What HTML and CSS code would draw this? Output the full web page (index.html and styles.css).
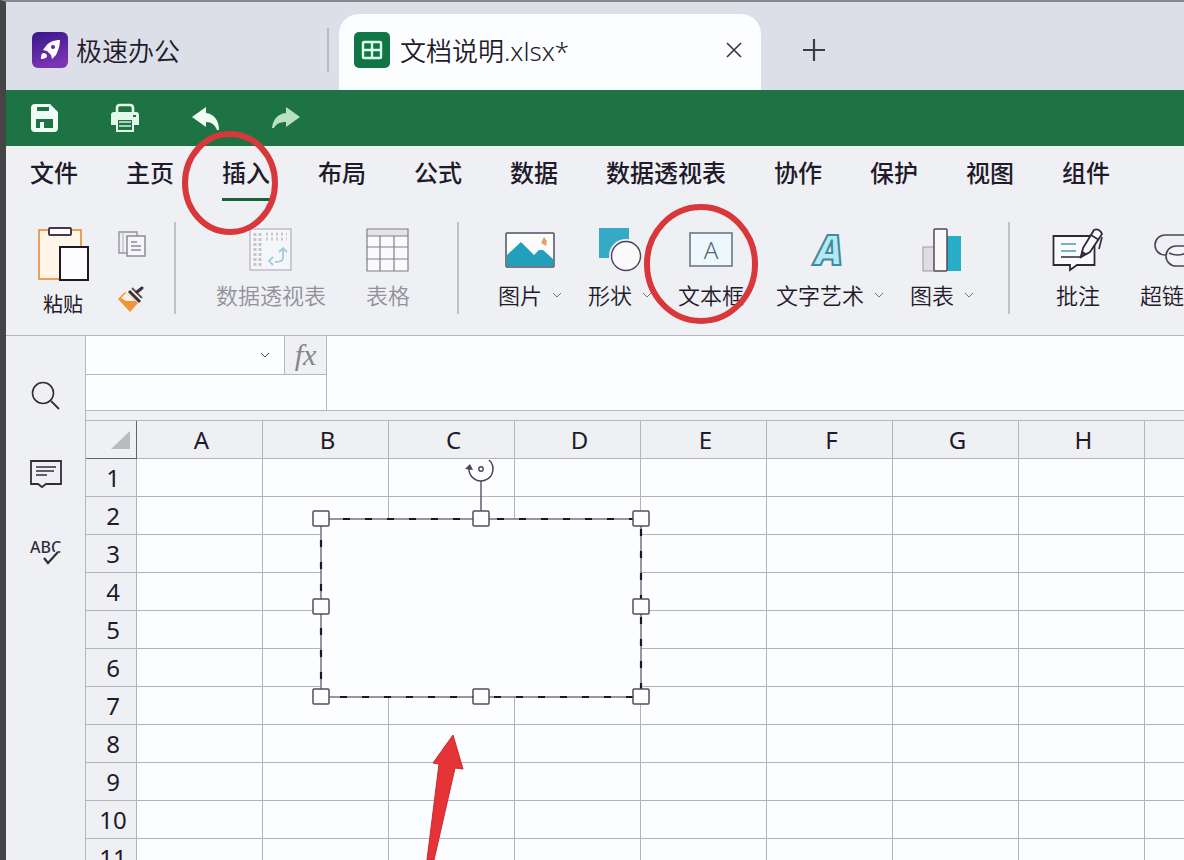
FILE: index.html
```html
<!DOCTYPE html>
<html lang="zh-CN">
<head>
<meta charset="utf-8">
<meta name="viewport" content="width=device-width, initial-scale=1">
<title>文档说明.xlsx</title>
<link rel="stylesheet" href="styles.css">
</head>
<body>
<header class="titlebar">
  <div class="brand">
    <svg class="badge" viewBox="0 0 36 36" aria-hidden="true">
      <defs><linearGradient id="brandFill" x1="0" y1="0" x2="0.3" y2="1"><stop offset="0" stop-color="#37158a"/><stop offset="1" stop-color="#7a35b5"/></linearGradient></defs>
      <rect width="36" height="36" rx="6" fill="url(#brandFill)"/>
      <path d="M28 8c-6 0-11 2-14 6l-3 4 4 1 4 4 1 4 4-4c2-4 4-9 4-15z" fill="#fff"/>
      <path d="M11 21c2 0 4 1 4 3s-3 3-6 3c0-3 0-5 2-6z" fill="#fff"/>
      <circle cx="21" cy="15" r="2" fill="#5b2aa0"/>
    </svg>
    <span>极速办公</span>
  </div>
  <div class="tab">
    <svg class="badge" viewBox="0 0 36 36" aria-hidden="true">
      <rect width="36" height="36" rx="5" fill="#127545"/>
      <rect x="9" y="10" width="18" height="16" rx="1" fill="none" stroke="#d9ffe9" stroke-width="2.4"/>
      <path d="M18 10v16M9 18h18" stroke="#d9ffe9" stroke-width="2.4"/>
    </svg>
    <span class="tab-name">文档说明.xlsx*</span>
    <button class="plain" aria-label="关闭"><svg width="18" height="18" viewBox="0 0 18 18"><path d="M2 2l14 14M16 2L2 16" stroke="#3c3346" stroke-width="1.6"/></svg></button>
  </div>
  <button class="plain add" aria-label="新建"><svg width="24" height="24" viewBox="0 0 24 24"><path d="M12 1v22M1 12h22" stroke="#3f3a48" stroke-width="2.2"/></svg></button>
</header>

<div class="quickbar">
  <button class="plain" aria-label="保存"><svg width="30" height="30" viewBox="0 0 30 30"><path fill="#effcf3" fill-rule="evenodd" d="M5 1h15l8 8v16q0 4-4 4H5q-4 0-4-4V5q0-4 4-4zM7 4v4h12V4zM6 16v9h4v-6h4v6h9v-9z"/></svg></button>
  <button class="plain" aria-label="打印"><svg width="30" height="30" viewBox="0 0 30 30"><path d="M7 9V5q0-3 3-3h10q3 0 3 3v4" fill="none" stroke="#e3f8ea" stroke-width="2.6"/><path fill="#e3f8ea" fill-rule="evenodd" d="M4 9h22q3 0 3 3v10h-5v7H6v-7H1V12q0-3 3-3zM8 17v10h14V17zM23 12v2h3v-2z"/><path d="M9 19h12M9 23h12" stroke="#a7d2b6" stroke-width="2"/></svg></button>
  <button class="plain" aria-label="撤销"><svg width="30" height="30" viewBox="0 0 30 30"><path fill="#effcf3" d="M2 14L16 4v6c8 1 13 7 13 17h-2c-2-5-5-8-11-8v5z"/></svg></button>
  <button class="plain" aria-label="重做"><svg width="30" height="30" viewBox="0 0 30 30"><path fill="#b9dfc4" d="M30 14L16 4v6C8 11 3 16 2 25h2c2-4 6-6 12-6v5z"/></svg></button>
</div>

<nav class="menu">
  <button>文件</button><button>主页</button><button class="active">插入</button><button>布局</button><button>公式</button><button>数据</button><button>数据透视表</button><button>协作</button><button>保护</button><button>视图</button><button>组件</button>
</nav>

<div class="ribbon">
  <div class="clip">
    <button class="tool paste">
      <svg width="52" height="56" viewBox="0 0 52 56"><rect x="2" y="4" width="42" height="49" fill="#fff6e9" stroke="#e8a058" stroke-width="2"/><rect x="12" y="2" width="22" height="7" rx="1" fill="#fff" stroke="#46364e" stroke-width="2"/><rect x="23" y="21" width="28" height="33" fill="#fdfdff" stroke="#1e1727" stroke-width="2"/></svg>
      <span>粘贴</span>
    </button>
    <div class="clip-side">
      <button class="plain" aria-label="复制"><svg width="30" height="28" viewBox="0 0 30 28"><path d="M10 23H2V2h18v4" fill="none" stroke="#94939c" stroke-width="1.4"/><path d="M6 2v20" stroke="#b0afb8"/><rect x="10" y="6" width="18" height="20" fill="#f6f6fa" stroke="#8c8b96" stroke-width="1.5"/><path d="M14 12h6M14 16h10M14 20h10" stroke="#8c8b96" stroke-width="1.3"/></svg></button>
      <button class="plain" aria-label="格式刷"><svg width="30" height="28" viewBox="0 0 30 28"><path d="M1 13l7-7 13 11-8 9z" fill="#f0953b"/><path d="M4 12l5-5 9 8-9 0z" fill="#fff2df"/><path d="M12 5l11 11" stroke="#3d3036" stroke-width="3"/><path d="M15 2l10 10" stroke="#69544a" stroke-width="2"/><path d="M20 6l5-4" stroke="#352e3c" stroke-width="3" stroke-linecap="round"/></svg></button>
    </div>
  </div>
  <div class="group data">
    <button class="tool" disabled>
      <svg width="44" height="44" viewBox="0 0 44 44"><rect x="1" y="1" width="41" height="41" fill="#f5f6f9" stroke="#a3a1ab"/><path d="M6 5v33M11 5v33" stroke="#c6c5cc" stroke-width="3" stroke-dasharray="3 2"/><path d="M17 6h21M17 11h21" stroke="#cbc9d0" stroke-width="3" stroke-dasharray="2 3"/><path d="M30 24l4-4 4 4M34 20v10c0 3-3 4-8 4M24 29l-4 4 4 4" fill="none" stroke="#9fd0db" stroke-width="1.8"/></svg>
      <span>数据透视表</span>
    </button>
    <button class="tool" disabled>
      <svg width="44" height="44" viewBox="0 0 44 44"><rect x="1" y="1" width="41" height="42" fill="#fafafd"/><path d="M1 1h41v7H1z" fill="#e3e3e8"/><path d="M1 1h41v42H1zM1 8h41M1 19h41M1 31h41M14 8v35M28 8v35" fill="none" stroke="#817f89" stroke-width="1.2"/></svg>
      <span>表格</span>
    </button>
  </div>
  <div class="group insert">
    <button class="tool">
      <svg width="50" height="44" viewBox="0 0 50 44"><rect x="1" y="5" width="48" height="34" rx="1" fill="#fbfbfb" stroke="#4c5260" stroke-width="1.5"/><path d="M2 27L16 14l13 13 5-5 4 0 10 9v7H2z" fill="#229fba"/><path d="M39 9l3 4-1 5-5-3z" fill="#e4a26a"/></svg>
      <span class="drop">图片<svg class="chev" viewBox="0 0 10 6"><path d="M1 1l4 4 4-4"/></svg></span>
    </button>
    <button class="tool">
      <svg width="44" height="44" viewBox="0 0 44 44"><path d="M1 0h30v18H17v12H1z" fill="#35a9c6"/><circle cx="28" cy="28" r="17" fill="#f0f1f5"/><circle cx="28" cy="28" r="14.5" fill="#fafafd" stroke="#51405a" stroke-width="1.4"/></svg>
      <span class="drop">形状<svg class="chev" viewBox="0 0 10 6"><path d="M1 1l4 4 4-4"/></svg></span>
    </button>
    <button class="tool textbox">
      <svg width="44" height="44" viewBox="0 0 44 44"><rect x="1" y="5" width="42" height="33" fill="#eef7fc" stroke="#687887" stroke-width="1.6"/><text class="glyph-a" x="22" y="31" text-anchor="middle">A</text></svg>
      <span>文本框</span>
    </button>
    <button class="tool">
      <svg class="art" width="44" height="44" viewBox="0 0 44 44"><text class="glyph-art" x="21" y="37" text-anchor="middle">A</text></svg>
      <span class="drop">文字艺术<svg class="chev" viewBox="0 0 10 6"><path d="M1 1l4 4 4-4"/></svg></span>
    </button>
    <button class="tool">
      <svg width="44" height="44" viewBox="0 0 44 44"><rect x="3" y="19" width="12" height="24" fill="#dedee4" stroke="#9a99a2"/><rect x="27" y="8" width="14" height="35" fill="#28adc8"/><rect x="14" y="1" width="13" height="42" rx="1" fill="#fbf9f8" stroke="#55445c" stroke-width="1.5"/></svg>
      <span class="drop">图表<svg class="chev" viewBox="0 0 10 6"><path d="M1 1l4 4 4-4"/></svg></span>
    </button>
  </div>
  <div class="group links">
    <button class="tool">
      <svg width="52" height="44" viewBox="0 0 52 44"><path d="M1.500 8h41v29H25l-7 5v-5H1.500z" fill="#fafafd" stroke="#2f2837" stroke-width="1.8"/><path d="M9 16h15M9 23h15" stroke="#4e9bb0" stroke-width="1.6"/><path d="M9 29h21" stroke="#3b3442" stroke-width="1.6"/><path d="M29 29l2-9L42 2q4-2 7 2l1 2-12 18z" fill="#fafafd" stroke="#2f2837" stroke-width="1.8"/><path d="M39 7l8 5M50 9l-3 12M29 29l1-5 4 2z" fill="#7b4a40" stroke="#2f2837" stroke-width="1.6"/></svg>
      <span>批注</span>
    </button>
    <button class="tool">
      <svg width="44" height="44" viewBox="0 0 44 44"><rect x="4" y="7" width="38" height="20" rx="10" fill="none" stroke="#4a4553" stroke-width="1.6"/><rect x="15" y="18" width="38" height="20" rx="10" fill="#f3f4f7" stroke="#4a4553" stroke-width="1.6"/><path d="M18 25q8 4 17 0" fill="none" stroke="#4a4553" stroke-width="1.6"/></svg>
      <span>超链接</span>
    </button>
  </div>
</div>

<div class="workspace">
  <aside class="side">
    <button class="plain" aria-label="搜索"><svg width="32" height="32" viewBox="0 0 32 32"><circle cx="13" cy="13" r="10.500" fill="none" stroke="#332d3b" stroke-width="1.600"/><path d="M21 21l8 8" stroke="#332d3b" stroke-width="1.800"/></svg></button>
    <button class="plain" aria-label="批注"><svg width="32" height="32" viewBox="0 0 32 32"><path d="M1 3h30v23H16l-4 3-4-3H1z" fill="none" stroke="#332d3b" stroke-width="1.800"/><path d="M6 9h20M6 13h18M6 17h11" stroke="#332d3b" stroke-width="1.700"/></svg></button>
    <button class="plain" aria-label="拼写检查"><svg width="32" height="32" viewBox="0 0 32 32"><text class="glyph-abc" x="0" y="17">ABC</text><path d="M14 22l4 5 10-11" fill="none" stroke="#f0f1f4" stroke-width="5"/><path d="M14 22l4 5 10-11" fill="none" stroke="#332d3b" stroke-width="2.200"/></svg></button>
  </aside>
  <main class="main">
    <div class="formula">
      <div class="namebox">
        <div class="name-row">
          <input class="name" aria-label="名称框">
          <button class="plain name-drop" aria-label="展开名称"><svg class="chev dark" viewBox="0 0 10 6"><path d="M1 1l4 4 4-4"/></svg></button>
          <button class="fx"><i>fx</i></button>
        </div>
      </div>
      <textarea class="expr" aria-label="编辑栏"></textarea>
    </div>
    <div class="sheet">
      <table class="cells">
        <colgroup><col class="c-head"><col class="c"><col class="c"><col class="c"><col class="c"><col class="c"><col class="c"><col class="c"><col class="c"><col></colgroup>
        <thead><tr><th class="corner"><svg width="20" height="20" viewBox="0 0 20 20"><path d="M19 1v18H0z" fill="#b9bbc1"/></svg></th><th>A</th><th>B</th><th>C</th><th>D</th><th>E</th><th>F</th><th>G</th><th>H</th><th></th></tr></thead>
        <tbody>
          <tr><th>1</th><td></td><td></td><td></td><td></td><td></td><td></td><td></td><td></td><td></td></tr>
          <tr><th>2</th><td></td><td></td><td></td><td></td><td></td><td></td><td></td><td></td><td></td></tr>
          <tr><th>3</th><td></td><td></td><td></td><td></td><td></td><td></td><td></td><td></td><td></td></tr>
          <tr><th>4</th><td></td><td></td><td></td><td></td><td></td><td></td><td></td><td></td><td></td></tr>
          <tr><th>5</th><td></td><td></td><td></td><td></td><td></td><td></td><td></td><td></td><td></td></tr>
          <tr><th>6</th><td></td><td></td><td></td><td></td><td></td><td></td><td></td><td></td><td></td></tr>
          <tr><th>7</th><td></td><td></td><td></td><td></td><td></td><td></td><td></td><td></td><td></td></tr>
          <tr><th>8</th><td></td><td></td><td></td><td></td><td></td><td></td><td></td><td></td><td></td></tr>
          <tr><th>9</th><td></td><td></td><td></td><td></td><td></td><td></td><td></td><td></td><td></td></tr>
          <tr><th>10</th><td></td><td></td><td></td><td></td><td></td><td></td><td></td><td></td><td></td></tr>
          <tr><th>11</th><td></td><td></td><td></td><td></td><td></td><td></td><td></td><td></td><td></td></tr>
        </tbody>
      </table>
      <svg class="shape" width="340" height="248" viewBox="0 0 340 248" aria-hidden="true">
        <rect x="10" y="60" width="320" height="178" fill="#fcfdff" stroke="#71667b" stroke-width="1.400"/>
        <rect x="10" y="60" width="320" height="178" fill="none" stroke="#1d1427" stroke-width="2.200" stroke-dasharray="7 15"/>
        <path d="M170 22v32" stroke="#665a70" stroke-width="1.500"/>
        <path d="M178 1A12 12 0 1 1 158 9" fill="none" stroke="#4e4159" stroke-width="1.500"/>
        <path d="M154 10l5-5 3 6z" fill="#4e4159"/>
        <circle cx="170" cy="10" r="2.200" fill="none" stroke="#4e4159" stroke-width="1.400"/>
        <g fill="#fdfdff" stroke="#584a62" stroke-width="1.500">
          <rect x="2" y="52" width="16" height="15" rx="1"/><rect x="162" y="52" width="16" height="15" rx="1"/><rect x="322" y="52" width="16" height="15" rx="1"/>
          <rect x="2" y="140" width="16" height="15" rx="1"/><rect x="322" y="140" width="16" height="15" rx="1"/>
          <rect x="2" y="230" width="16" height="15" rx="1"/><rect x="162" y="230" width="16" height="15" rx="1"/><rect x="322" y="230" width="16" height="15" rx="1"/>
        </g>
      </svg>
      <svg class="arrow" width="40" height="126" viewBox="0 0 40 126" aria-hidden="true"><path d="M27 1l10 34-8-1L8 126H1l12-96-6-1z" fill="#e63338" stroke="#c52b31"/></svg>
    </div>
  </main>
</div>
<svg class="mark mark-menu" viewBox="0 0 98 106" aria-hidden="true"><ellipse cx="49" cy="53" rx="45" ry="49"/></svg>
<svg class="mark mark-tool" viewBox="0 0 116 122" aria-hidden="true"><ellipse cx="58" cy="61" rx="54" ry="57"/></svg>
</body>
</html>
```

FILE: styles.css
```css
* { box-sizing: border-box; }

body {
  margin: 0;
  height: 100vh;
  overflow: hidden;
  position: relative;
  display: flex;
  flex-direction: column;
  border-left: 6px solid #454547;
  border-top: 2px solid #85888c;
  background: #eff0f3;
  color: #221a2b;
  font-family: "Noto Sans", "Noto Sans CJK SC", sans-serif;
}

button {
  margin: 0;
  padding: 0;
  border: 0;
  background: none;
  color: inherit;
  font: inherit;
  white-space: nowrap;
}

svg { display: block; flex: none; }
.plain { display: flex; }

/* Title bar */
.titlebar {
  flex: none;
  height: 88px;
  display: flex;
  align-items: center;
  padding-top: 8px;
  background: #dcdfe8;
  font-size: 26px;
  font-weight: 350;
}
.badge { width: 36px; height: 36px; }
.brand {
  width: 323px;
  height: 44px;
  padding-left: 26px;
  display: flex;
  align-items: center;
  gap: 8px;
  border-right: 2px solid #b9bbc4;
}
.tab {
  width: 422px;
  align-self: stretch;
  margin-left: 10px;
  margin-top: 4px;
  padding: 0 18px 4px 15px;
  display: flex;
  align-items: center;
  gap: 10px;
  background: #fcfdff;
  border-radius: 20px 20px 0 0;
}
.tab-name { flex: 1; }
.add { margin-left: 41px; }

.quickbar {
  flex: none;
  height: 56px;
  padding-left: 24px;
  display: flex;
  align-items: center;
  gap: 50px;
  background: #1e7344;
}

/* Menu */
.menu {
  flex: none;
  height: 64px;
  padding: 0 24px;
  display: flex;
  align-items: flex-start;
  gap: 48px;
  font-size: 24px;
  font-weight: 500;
}
.menu button {
  height: 55px;
  line-height: 54px;
  border-bottom: 3px solid transparent;
}
.menu .active { border-color: #14633b; }

/* Ribbon */
.ribbon {
  flex: none;
  height: 126px;
  padding-top: 12px;
  display: flex;
  align-items: flex-start;
  border-bottom: 1px solid #b5b6be;
  overflow: hidden;
  font-size: 22px;
  font-weight: 350;
}
.tool {
  flex: none;
  display: flex;
  flex-direction: column;
  align-items: center;
  gap: 7px;
  padding-top: 6px;
  line-height: 32px;
}
.tool:disabled { color: #92909a; }
.clip { flex: none; display: flex; gap: 28px; width: 168px; padding-left: 31px; }
.paste { font-size: 20px; font-weight: 400; padding-top: 4px; }
.clip-side { display: flex; flex-direction: column; gap: 28px; padding-top: 8px; }
.group {
  flex: none;
  height: 92px;
  display: flex;
  border-left: 2px solid #c1c2c9;
}
.data { width: 283px; padding-left: 40px; gap: 40px; }
.insert { width: 551px; padding-left: 39px; gap: 26px; }
.links { padding-left: 42px; gap: 36px; }
.textbox { padding-right: 6px; }
.drop { display: flex; align-items: center; gap: 10px; }
.chev { width: 10px; height: 6px; fill: none; stroke: #77747e; }
.dark { stroke: #4c4953; }
.glyph-a { font: 300 24px "Noto Sans", sans-serif; fill: #52697a; }
.art { overflow: visible; }
.glyph-art { font: italic 800 42px "Open Sans", sans-serif; fill: #b4e8f4; stroke: #3c8ba0; stroke-width: 2px; }
.glyph-abc { font: 500 16px "Noto Sans", sans-serif; fill: #332d3b; }

/* Workspace */
.workspace { flex: 1; min-height: 0; display: flex; }
.side {
  flex: none;
  width: 79px;
  padding-top: 44px;
  display: flex;
  flex-direction: column;
  align-items: center;
  gap: 46px;
}
.main { flex: 1; min-width: 0; display: flex; flex-direction: column; border-left: 1px solid #b5b6be; }
.formula {
  flex: none;
  height: 75px;
  display: flex;
  background: #fcfdff;
  border-bottom: 1px solid #b5b6be;
}
.namebox { width: 241px; border-right: 1px solid #b5b6be; }
.name-row { height: 39px; display: flex; border-bottom: 1px solid #b5b6be; }
.name { flex: 1; min-width: 0; border: 0; background: none; }
.name-drop { width: 38px; align-items: center; justify-content: center; }
.fx {
  width: 42px;
  border-left: 1px solid #b5b6be;
  background: #eff0f3;
  color: #85848c;
  font: 30px/34px "Liberation Serif", serif;
}
.expr { flex: 1; border: 0; resize: none; background: none; }

.sheet {
  flex: 1;
  min-height: 0;
  margin-top: 9px;
  position: relative;
  overflow: hidden;
  border-top: 1px solid #b5b6be;
  background: #fcfdff;
}
.cells { width: 100%; table-layout: fixed; border-collapse: separate; border-spacing: 0; }
.c-head { width: 51px; }
.c { width: 126px; }
.cells th, .cells td {
  height: 38px;
  padding: 0;
  border-right: 1px solid #b2b3bc;
  border-bottom: 1px solid #b2b3bc;
}
.cells tr > :last-child { border-right: 0; }
.cells th {
  padding-left: 4px;
  background: #eff0f3;
  font-size: 24px;
  line-height: 36px;
  font-weight: 400;
}
.cells .corner { border-color: #65636b; }
.corner svg { margin-left: 21px; }

/* Items lying over the sheet and ribbon */
.shape { position: absolute; left: 225px; top: 38px; }
.arrow { position: absolute; left: 340px; top: 313px; }
.mark {
  position: absolute;
  fill: none;
  stroke: #d8383b;
  stroke-width: 6px;
  pointer-events: none;
}
.mark-menu { left: 175px; top: 128px; width: 98px; height: 106px; }
.mark-tool { left: 637px; top: 201px; width: 116px; height: 122px; }
```
